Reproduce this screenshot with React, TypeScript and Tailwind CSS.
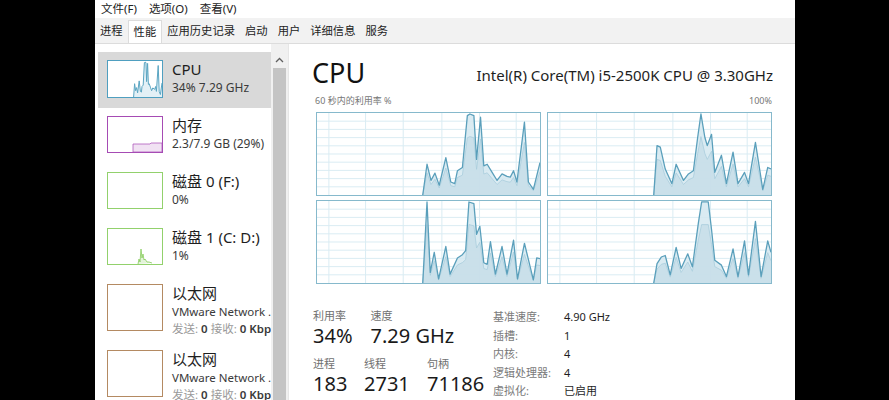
import React from 'react';

type Pt = [number, number];

// points read off the reference: x in crop coords (15..690), value 0-100
const g1: Pt[] = [[335, 0], [348, 38], [360, 18], [372, 27], [385, 12], [405, 46], [420, 16], [432, 14], [440, 30], [455, 34], [470, 98], [478, 100], [490, 98], [498, 44], [510, 96], [520, 36], [530, 38], [545, 28], [560, 18], [575, 26], [590, 23], [600, 22], [610, 30], [620, 16], [643, 90], [655, 16], [670, 7], [690, 40]];
const g2: Pt[] = [[335, 0], [348, 100], [358, 13], [370, 38], [383, 5], [405, 45], [418, 11], [440, 31], [455, 35], [465, 40], [475, 100], [490, 98], [498, 60], [508, 70], [520, 25], [530, 23], [540, 51], [555, 11], [575, 45], [590, 11], [610, 53], [622, 5], [643, 49], [670, 4], [680, 31], [690, 30]];
const g3: Pt[] = [[335, 0], [345, 61], [355, 59], [370, 32], [390, 14], [403, 38], [425, 18], [440, 26], [455, 30], [468, 71], [478, 100], [490, 71], [497, 61], [510, 75], [520, 28], [540, 49], [555, 14], [575, 53], [590, 14], [610, 28], [622, 14], [643, 65], [665, 7], [680, 34], [690, 32]];
const g4: Pt[] = [[335, 0], [345, 24], [358, 32], [370, 34], [385, 10], [403, 44], [418, 18], [438, 36], [452, 20], [470, 74], [480, 100], [500, 100], [510, 66], [520, 28], [540, 22], [555, 8], [575, 42], [590, 8], [610, 52], [622, 10], [643, 76], [660, 8], [680, 52], [690, 38]];

const toPoints = (data: Pt[], w: number, h: number, scale = 1) =>
  data
    .map(([x, v]) => `${(((x - 15) / 675) * w).toFixed(1)},${(h - (v * scale * (h - 1)) / 100).toFixed(1)}`)
    .join(' ');

const CpuGraph = ({ data }: { data: Pt[] }) => {
  const W = 225;
  const H = 84;
  const line = toPoints(data, W, H);
  const kernel = toPoints(data, W, H, 0.72);
  const startX = ((data[0][0] - 15) / 675) * W;
  const endX = ((data[data.length - 1][0] - 15) / 675) * W;
  const vLines = [12, 49, 87, 126, 164, 201];
  const hLines = [1, 2, 3, 4, 5, 6, 7, 8, 9].map((i) => (i * H) / 10);
  return (
    <div className="h-[84px] w-[225px] border border-[#86b9cc] bg-white">
      <svg width="100%" height="100%" viewBox={`0 0 ${W} ${H}`} preserveAspectRatio="none">
        {vLines.map((x) => (
          <line key={`v${x}`} x1={x} y1={0} x2={x} y2={H} stroke="#d9ecf3" strokeWidth={1} />
        ))}
        {hLines.map((y) => (
          <line key={`h${y}`} x1={0} y1={y} x2={W} y2={y} stroke="#d9ecf3" strokeWidth={1} />
        ))}
        <polygon points={`${startX},${H} ${line} ${endX},${H}`} fill="#d3e7f0" fillOpacity={0.85} />
        <polygon points={`${startX},${H} ${kernel} ${endX},${H}`} fill="#c3dbe7" fillOpacity={0.7} />
        <polyline points={kernel} fill="none" stroke="#a9cddd" strokeWidth={0.8} />
        <polyline points={line} fill="none" stroke="#5a9fbb" strokeWidth={1.3} strokeLinejoin="round" />
      </svg>
    </div>
  );
};

const Thumb = ({ color, h, children }: { color: string; h: number; children?: React.ReactNode }) => (
  <div className="w-[56px] shrink-0 border bg-white" style={{ borderColor: color, height: h }}>
    {children}
  </div>
);

const CpuThumb = () => (
  <svg width="100%" height="100%" viewBox="0 0 54 36" preserveAspectRatio="none">
    <polygon points={`${((335 - 15) / 675) * 54},36 ${toPoints(g1, 54, 36)} 54,36`} fill="#e3f0f6" />
    <polyline points={toPoints(g1, 54, 36)} fill="none" stroke="#5aa5c2" strokeWidth={1} />
  </svg>
);

const MemThumb = () => (
  <svg width="100%" height="100%" viewBox="0 0 54 35" preserveAspectRatio="none">
    <polygon points="25,35 25,27 42,27 43,26 54,26 54,35" fill="#f1e2f3" stroke="#b05abd" strokeWidth={0.8} />
  </svg>
);

const DiskThumb = () => (
  <svg width="100%" height="100%" viewBox="0 0 54 35" preserveAspectRatio="none">
    <polyline points="30,35 31,30 32,33 33,20 34,29 35,25 36,31 37,30 39,33 41,33 44,34" fill="#e4f3da" stroke="#86cb5c" strokeWidth={0.8} />
  </svg>
);

const SideItem = ({
  selected,
  thumb,
  title,
  lines,
  tall,
}: {
  selected?: boolean;
  thumb: React.ReactNode;
  title: string;
  lines: React.ReactNode[];
  tall?: boolean;
}) => (
  <div className={`flex gap-[9px] pl-[9px] pt-[8px] ${tall ? 'h-[66px]' : 'h-[56px]'} ${selected ? 'bg-[#d9d9d9]' : ''}`}>
    {thumb}
    <div className="-mt-[1px] flex-1 whitespace-nowrap">
      <div className="text-[15px] leading-[20px] text-[#1e1e1e]">{title}</div>
      {lines.map((l, i) => (
        <div key={i} className={`${tall ? 'text-[11.5px]' : 'text-[12px]'} leading-[17px] text-[#3a3a3a]`}>
          {l}
        </div>
      ))}
    </div>
  </div>
);

const EthLine = () => (
  <span>
    <span className="text-[#9a9a9a]">发送:</span> <span className="font-semibold">0</span>{' '}
    <span className="text-[#9a9a9a]">接收:</span> <span className="font-semibold">0 Kbps</span>
  </span>
);

export default function App() {
  const tabs = ['进程', '性能', '应用历史记录', '启动', '用户', '详细信息', '服务'];
  const info: [string, string][] = [
    ['基准速度:', '4.90 GHz'],
    ['插槽:', '1'],
    ['内核:', '4'],
    ['逻辑处理器:', '4'],
    ['虚拟化:', '已启用'],
  ];

  return (
    <div className="flex h-[400px] w-[889px] overflow-hidden bg-black font-['Noto_Sans','Noto_Sans_CJK_SC',sans-serif]">
      <div className="w-[95px] shrink-0" />
      <div className="flex w-[700px] shrink-0 flex-col bg-white">
        {/* Menu bar */}
        <div className="flex h-[18px] items-center gap-[12px] pl-[6px] text-[11.5px] text-[#222]">
          <span>文件(F)</span>
          <span>选项(O)</span>
          <span>查看(V)</span>
        </div>

        {/* Tabs */}
        <div className="flex h-[26px] items-end border-b border-[#dcdcdc] bg-[#f2f2f2] pl-[0px]">
          {tabs.map((t) => (
            <div
              key={t}
              className={`flex h-[23px] items-center px-[5px] text-[11.3px] text-[#222] ${
                t === '性能' ? 'border-x border-t border-[#dcdcdc] bg-white' : ''
              }`}
            >
              {t}
            </div>
          ))}
        </div>

        <div className="flex min-h-0 flex-1">
          {/* Sidebar */}
          <div className="w-[176px] shrink-0 overflow-hidden pl-[3px] pt-[8px]">
            <SideItem selected thumb={<Thumb color="#4f9fc0" h={38}><CpuThumb /></Thumb>} title="CPU" lines={['34% 7.29 GHz']} />
            <SideItem thumb={<Thumb color="#a64bb4" h={37}><MemThumb /></Thumb>} title="内存" lines={['2.3/7.9 GB (29%)']} />
            <SideItem thumb={<Thumb color="#92d16c" h={37} />} title="磁盘 0 (F:)" lines={['0%']} />
            <SideItem thumb={<Thumb color="#92d16c" h={37}><DiskThumb /></Thumb>} title="磁盘 1 (C: D:)" lines={['1%']} />
            <SideItem tall thumb={<Thumb color="#b48a62" h={47} />} title="以太网" lines={['VMware Network ...', <EthLine />]} />
            <SideItem tall thumb={<Thumb color="#b48a62" h={47} />} title="以太网" lines={['VMware Network ...', <EthLine />]} />
          </div>

          {/* Scrollbar */}
          <div className="flex w-[17px] shrink-0 flex-col items-center bg-[#f0f0f0]">
            <svg width="9" height="6" viewBox="0 0 9 6" className="mt-[13px]">
              <polyline points="1,5 4.5,1.5 8,5" fill="none" stroke="#606060" strokeWidth={1.3} />
            </svg>
            <div className="mt-[5px] w-[13px] flex-1 bg-[#c4c4c4]" />
          </div>

          {/* Main panel */}
          <div className="min-w-0 flex-1 border-l border-[#e6e6e6] pl-[23px] pr-[22px]">
            <div className="flex items-end justify-between pt-[11px]">
              <div className="text-[27px] leading-[36px] text-[#111]">CPU</div>
              <div className="pb-[6px] text-[15px] leading-[20px] text-[#1e1e1e]">Intel(R) Core(TM) i5-2500K CPU @ 3.30GHz</div>
            </div>
            <div className="mt-[4px] flex w-[460px] justify-between pl-[3px] text-[9px] leading-[12px] text-[#777]">
              <span>60 秒内的利用率 %</span>
              <span>100%</span>
            </div>
            <div className="mt-[5px] grid w-[460px] grid-cols-2 gap-x-[5px] gap-y-[4px] pl-[4px]">
              <CpuGraph data={g1} />
              <CpuGraph data={g3} />
              <CpuGraph data={g2} />
              <CpuGraph data={g4} />
            </div>

            {/* Stats */}
            <div className="mt-[25px] flex">
              <div className="w-[181px] shrink-0 pl-[1px]">
                <div className="flex gap-[18px]">
                  <div>
                    <div className="text-[11px] leading-[14px] text-[#707070]">利用率</div>
                    <div className="text-[20px] leading-[26px] text-[#1a1a1a]">34%</div>
                  </div>
                  <div>
                    <div className="text-[11px] leading-[14px] text-[#707070]">速度</div>
                    <div className="text-[20px] leading-[26px] text-[#1a1a1a]">7.29 GHz</div>
                  </div>
                </div>
                <div className="mt-[8px] flex gap-[15px]">
                  <div className="w-[36px]">
                    <div className="text-[11px] leading-[14px] text-[#707070]">进程</div>
                    <div className="text-[20px] leading-[26px] text-[#1a1a1a]">183</div>
                  </div>
                  <div className="w-[48px]">
                    <div className="text-[11px] leading-[14px] text-[#707070]">线程</div>
                    <div className="text-[20px] leading-[26px] text-[#1a1a1a]">2731</div>
                  </div>
                  <div>
                    <div className="text-[11px] leading-[14px] text-[#707070]">句柄</div>
                    <div className="text-[20px] leading-[26px] text-[#1a1a1a]">71186</div>
                  </div>
                </div>
              </div>
              <div className="grid grid-cols-[71px_auto] gap-y-[3px] text-[11px] leading-[15.5px]">
                {info.map(([k, v]) => (
                  <React.Fragment key={k}>
                    <span className="text-[#7a7a7a]">{k}</span>
                    <span className="text-[#1e1e1e]">{v}</span>
                  </React.Fragment>
                ))}
              </div>
            </div>
          </div>
        </div>
      </div>
      <div className="flex-1" />
    </div>
  );
}
